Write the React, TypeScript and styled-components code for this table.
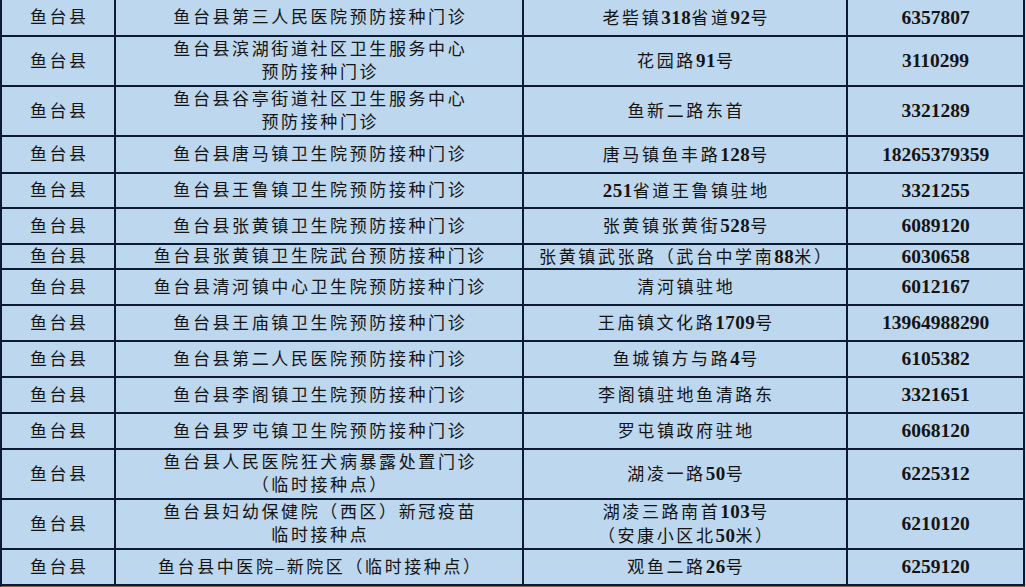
import styled, { createGlobalStyle } from 'styled-components';

type Row = {
  h: number;
  county: string;
  clinic: string[];
  address: string[];
  phone: string;
};

const rows: Row[] = [
  { h: 37, county: '鱼台县', clinic: ['鱼台县第三人民医院预防接种门诊'], address: ['老砦镇318省道92号'], phone: '6357807' },
  { h: 50, county: '鱼台县', clinic: ['鱼台县滨湖街道社区卫生服务中心', '预防接种门诊'], address: ['花园路91号'], phone: '3110299' },
  { h: 50, county: '鱼台县', clinic: ['鱼台县谷亭街道社区卫生服务中心', '预防接种门诊'], address: ['鱼新二路东首'], phone: '3321289' },
  { h: 37, county: '鱼台县', clinic: ['鱼台县唐马镇卫生院预防接种门诊'], address: ['唐马镇鱼丰路128号'], phone: '18265379359' },
  { h: 35, county: '鱼台县', clinic: ['鱼台县王鲁镇卫生院预防接种门诊'], address: ['251省道王鲁镇驻地'], phone: '3321255' },
  { h: 36, county: '鱼台县', clinic: ['鱼台县张黄镇卫生院预防接种门诊'], address: ['张黄镇张黄街528号'], phone: '6089120' },
  { h: 25, county: '鱼台县', clinic: ['鱼台县张黄镇卫生院武台预防接种门诊'], address: ['张黄镇武张路（武台中学南88米）'], phone: '6030658' },
  { h: 36, county: '鱼台县', clinic: ['鱼台县清河镇中心卫生院预防接种门诊'], address: ['清河镇驻地'], phone: '6012167' },
  { h: 36, county: '鱼台县', clinic: ['鱼台县王庙镇卫生院预防接种门诊'], address: ['王庙镇文化路1709号'], phone: '13964988290' },
  { h: 36, county: '鱼台县', clinic: ['鱼台县第二人民医院预防接种门诊'], address: ['鱼城镇方与路4号'], phone: '6105382' },
  { h: 36, county: '鱼台县', clinic: ['鱼台县李阁镇卫生院预防接种门诊'], address: ['李阁镇驻地鱼清路东'], phone: '3321651' },
  { h: 36, county: '鱼台县', clinic: ['鱼台县罗屯镇卫生院预防接种门诊'], address: ['罗屯镇政府驻地'], phone: '6068120' },
  { h: 50, county: '鱼台县', clinic: ['鱼台县人民医院狂犬病暴露处置门诊', '（临时接种点）'], address: ['湖凌一路50号'], phone: '6225312' },
  { h: 50, county: '鱼台县', clinic: ['鱼台县妇幼保健院（西区）新冠疫苗', '临时接种点'], address: ['湖凌三路南首103号', '（安康小区北50米）'], phone: '6210120' },
  { h: 36, county: '鱼台县', clinic: ['鱼台县中医院–新院区（临时接种点）'], address: ['观鱼二路26号'], phone: '6259120' },
];

// digits are set bold in the sheet, the Chinese text is not
const withNumbers = (text: string) =>
  text.split(/(\d+)/).map((part, i) =>
    /^\d+$/.test(part) ? <Num key={i}>{part}</Num> : <span key={i}>{part}</span>
  );

const Lines = ({ lines }: { lines: string[] }) => (
  <>
    {lines.map((line, i) => (
      <Line key={i}>{withNumbers(line)}</Line>
    ))}
  </>
);

const App = () => {
  return (
    <>
      <GlobalStyle />
      <Sheet>
        {rows.map((row, i) => (
          <TableRow key={i} $h={row.h}>
            <Cell>
              <Line>{row.county}</Line>
            </Cell>
            <Cell>
              <Lines lines={row.clinic} />
            </Cell>
            <Cell>
              <Lines lines={row.address} />
            </Cell>
            <Cell>
              <Phone>{row.phone}</Phone>
            </Cell>
          </TableRow>
        ))}
      </Sheet>
    </>
  );
};

const GlobalStyle = createGlobalStyle`
  html, body {
    margin: 0;
    padding: 0;
    background: #bdd7ee;
  }

  body {
    font-family: "Liberation Serif", "Noto Sans CJK SC", serif;
    color: #141414;
  }
`;

const Sheet = styled.div`
  width: 1025px;
  height: 587px;
  overflow: hidden;
  box-sizing: border-box;
  border-left: 2px solid #0c1a33;
  border-bottom: 1px solid #8a6a4a;
  background: #bdd7ee;
`;

const TableRow = styled.div<{ $h: number }>`
  display: grid;
  grid-template-columns: 114px 408px 324px 177px;
  height: ${(p) => p.$h}px;
`;

const Cell = styled.div`
  box-sizing: border-box;
  display: flex;
  flex-direction: column;
  align-items: center;
  justify-content: center;
  text-align: center;
  border-right: 2px solid #0c1a33;
  border-bottom: 2px solid #0c1a33;
  overflow: hidden;
`;

const Line = styled.div`
  font-family: "Liberation Serif", "Noto Sans CJK SC", serif;
  font-size: 17px;
  line-height: 23px;
  letter-spacing: 2.6px;
  padding-left: 2.6px;
  white-space: nowrap;
`;

const Num = styled.span`
  font-weight: 700;
  font-size: 19px;
  letter-spacing: 0.5px;
`;

const Phone = styled.div`
  font-family: "Liberation Serif", serif;
  font-weight: 700;
  font-size: 19.5px;
  line-height: 22px;
`;

export default App;
